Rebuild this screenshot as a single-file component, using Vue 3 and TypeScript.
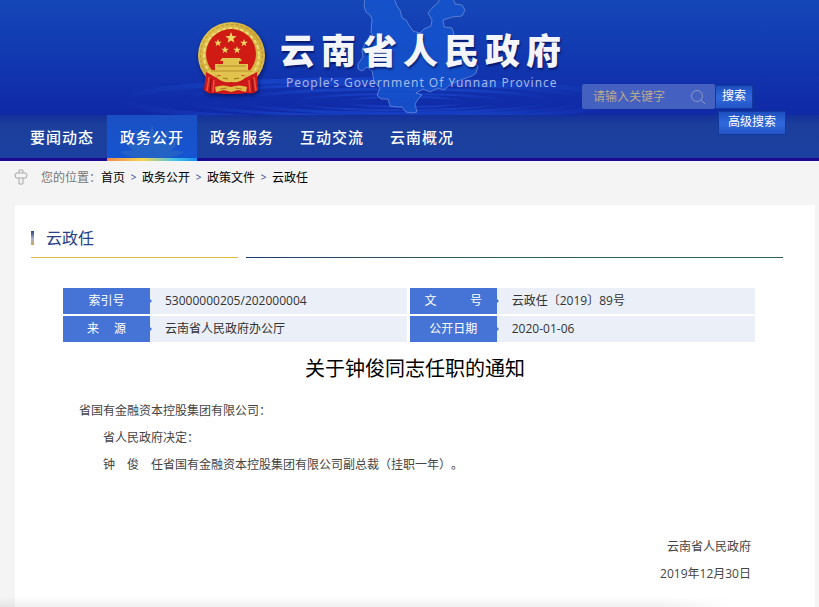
<script setup lang="ts">
import { ref } from 'vue'

interface InfoField {
  label: string
  value: string
}

const navItems: string[] = ['要闻动态', '政务公开', '政务服务', '互动交流', '云南概况']
const activeItem = ref('政务公开')
const keyword = ref('')

const crumbs: string[] = ['首页', '政务公开', '政策文件', '云政任']

const infoRows: InfoField[][] = [
  [
    { label: '索引号', value: '53000000205/202000004' },
    { label: '文\u3000\u3000\u00a0\u00a0\u00a0号', value: '云政任〔2019〕89号' },
  ],
  [
    { label: '来\u3000\u00a0源', value: '云南省人民政府办公厅' },
    { label: '公开日期', value: '2020-01-06' },
  ],
]

const starPoints = (cx: number, cy: number, r: number): string =>
  Array.from({ length: 10 }, (_, i) => {
    const radius = i % 2 === 0 ? r : r * 0.4
    const angle = (Math.PI / 5) * i - Math.PI / 2
    return `${(cx + radius * Math.cos(angle)).toFixed(2)},${(cy + radius * Math.sin(angle)).toFixed(2)}`
  }).join(' ')

const stars: string[] = [
  starPoints(34, 16, 6),
  starPoints(21, 21, 4),
  starPoints(47, 21, 4),
  starPoints(28, 28, 4),
  starPoints(40, 28, 4),
]
</script>

<template>
  <div class="page">
    <header class="banner">
      <svg class="backdrop" viewBox="0 0 819 115" preserveAspectRatio="xMinYMin slice" aria-hidden="true">
        <defs>
          <linearGradient id="wave" x1="0" x2="1" y1="0" y2="0">
            <stop offset="0" stop-color="#1c50da" stop-opacity="0" />
            <stop offset="0.25" stop-color="#1c50da" stop-opacity="0.5" />
            <stop offset="0.75" stop-color="#1c50da" stop-opacity="0.5" />
            <stop offset="1" stop-color="#1c50da" stop-opacity="0" />
          </linearGradient>
        </defs>
        <g fill="none" stroke="url(#wave)">
          <ellipse cx="370" cy="100" rx="245" ry="20" stroke-width="5" />
          <ellipse cx="385" cy="100" rx="200" ry="16" stroke-width="3" />
          <ellipse cx="395" cy="101" rx="155" ry="12" stroke-width="3" />
          <ellipse cx="400" cy="102" rx="105" ry="8" stroke-width="2" />
          <ellipse cx="405" cy="102" rx="60" ry="5" stroke-width="2" />
        </g>
        <path
          d="M365-2 364 6 366 12 370 15 372 19 371 32 373 36 366 42 362 50 363 57 358 64 358 69 362 71 367 67 372 71 374 81 380 88 377 95 381 99 388 99 390 106 397 107 402 107 406 112 412 113 417 112 415 104 419 98 422 95 416 93 423 89 430 92 438 88 444 90 451 84 458 81 463 79 472 76 476 73 478 66 472 60 464 56 461 49 450 44 449 38 454 34 452 28 444 27 443 20 452 17 462 16 465 10 462 5 455 4 453-2H440L438 3 433 7 428 13 432 20 431 26 424 29 420 33 413 31 409 25 406 20 402 18 400 10 397 6 394-2Z"
          fill="#1554cc"
          fill-opacity="0.85"
          stroke="#7593dc"
          stroke-opacity="0.7"
          stroke-linejoin="round"
        />
      </svg>

      <div class="brand">
        <svg class="emblem" viewBox="0 0 69 74" role="img" aria-label="国徽">
          <defs>
            <linearGradient id="gold" x1="0" x2="1" y1="0" y2="1">
              <stop offset="0" stop-color="#e6cd58" />
              <stop offset="0.5" stop-color="#cda93a" />
              <stop offset="1" stop-color="#e3c64e" />
            </linearGradient>
          </defs>
          <circle cx="34.5" cy="33.500" r="33.500" fill="url(#gold)" />
          <circle cx="34.5" cy="33.500" r="31" fill="none" stroke="#b8922e" stroke-width="1" stroke-dasharray="3 2" />
          <circle cx="34.5" cy="33.500" r="27.500" fill="none" stroke="#eedb76" stroke-width="2" stroke-dasharray="4 2" />
          <circle cx="34" cy="32" r="25" fill="#cf1b14" />
          <polygon v-for="(points, i) in stars" :key="i" :points="points" fill="#edd767" />
          <path d="M25 36H43L45 39H42V42H51V48H57Q56 51 54 53H14Q12 51 11 48H18V42H26V39H23Z" fill="#e2c24e" />
          <path d="M20 44H49M14 49H55" stroke="#b58b25" />
          <path d="M9 50Q13 52 20 56L48 56Q56 52 60 50L61 68Q56 73 50 71L42 72H26L18 71Q12 73 7 68Z" fill="#cd1919" />
          <path d="M12 55 10 69M17 58 16 70M57 55 59 69M52 58 53 70" stroke="#ee5440" stroke-width="1.5" />
          <path d="M14 57 13 70M55 57 56 70" stroke="#8d0b12" />
          <path d="M20 56Q24 51 30 53L34 51 38 53Q44 51 48 56 43 61 34 60 25 61 20 56Z" fill="#e1c34c" />
          <path d="M26 56 31 57M37 57 42 56" stroke="#9a741c" />
          <path d="M18 65Q26 62 34 65 42 62 50 65L49 70 41 68 34 70 27 68 19 70Z" fill="#dfbd46" />
          <path d="M23 67 30 66M38 66 45 67" stroke="#a87c20" />
        </svg>
        <div class="names">
          <h1>云南省人民政府</h1>
          <p>People’s Government Of Yunnan Province</p>
        </div>
      </div>

      <form class="search" @submit.prevent>
        <div class="search-row">
          <label class="search-box">
            <input v-model="keyword" type="text" placeholder="请输入关键字" aria-label="请输入关键字" />
            <svg viewBox="0 0 16 16" aria-hidden="true">
              <circle cx="7" cy="7" r="5.500" />
              <path d="M11 11 15 15" />
            </svg>
          </label>
          <button type="submit">搜索</button>
        </div>
        <button class="advanced" type="button">高级搜索</button>
      </form>
    </header>

    <nav class="main-nav">
      <a
        v-for="item in navItems"
        :key="item"
        href="#"
        :class="{ active: item === activeItem }"
        @click.prevent="activeItem = item"
      >
        <svg v-if="item === activeItem" class="plume" viewBox="0 0 90 42" aria-hidden="true">
          <g fill="#3f7fb4">
            <path d="M45 42Q38 26 45 8 52 26 45 42Z" />
            <path d="M45 42Q29 30 28 14 43 24 45 42Z" />
            <path d="M45 42Q61 30 62 14 47 24 45 42Z" />
            <path d="M45 42Q24 38 17 24 36 26 45 42Z" />
            <path d="M45 42Q66 38 73 24 54 26 45 42Z" />
            <path d="M45 42Q26 44 13 36 30 31 45 42Z" />
            <path d="M45 42Q64 44 77 36 60 31 45 42Z" />
          </g>
        </svg>
        <span>{{ item }}</span>
      </a>
    </nav>

    <div class="crumbs">
      <svg viewBox="0 0 14 16" aria-hidden="true">
        <path d="M5 4V1H9V4M2 4H12L13 6 12 9H2L1 6ZM5 9V15H9V9" />
      </svg>
      <span class="where">您的位置：</span>
      <template v-for="(crumb, i) in crumbs" :key="crumb">
        <span v-if="i > 0" class="sep">&gt;</span>
        <a href="#">{{ crumb }}</a>
      </template>
    </div>

    <main class="card">
      <h2 class="section">云政任</h2>
      <div class="rules"><i class="rule-gold"></i><i class="rule-green"></i></div>

      <table class="info">
        <tbody>
          <tr v-for="(row, r) in infoRows" :key="r">
            <template v-for="field in row" :key="field.label">
              <th scope="row">{{ field.label }}</th>
              <td>{{ field.value }}</td>
            </template>
          </tr>
        </tbody>
      </table>

      <article>
        <h3>关于钟俊同志任职的通知</h3>
        <p>省国有金融资本控股集团有限公司：</p>
        <p class="indent">省人民政府决定：</p>
        <p class="indent">钟　俊　任省国有金融资本控股集团有限公司副总裁（挂职一年）。</p>
        <div class="signature">
          <p>云南省人民政府</p>
          <p>2019年12月30日</p>
        </div>
      </article>
    </main>
  </div>
</template>

<style>
body {
  margin: 0;
}
</style>

<style scoped>
.page {
  position: relative;
  display: flex;
  flex-direction: column;
  min-height: 100vh;
  overflow: hidden;
  background: #f4f4f4;
  color: #444;
  font-family: "Open Sans", "Noto Sans CJK SC", sans-serif;
  font-size: 12px;
  text-spacing-trim: space-all;
}

.page::after {
  content: "";
  position: absolute;
  left: 0;
  right: 84px;
  bottom: 0;
  height: 10px;
  background: linear-gradient(rgba(0, 0, 0, 0), rgba(0, 0, 0, 0.06));
  mask-image: linear-gradient(90deg, #000 90%, transparent);
}

a {
  color: inherit;
  text-decoration: none;
}

h1,
h2,
h3,
p {
  margin: 0;
  font-weight: 400;
}

.banner {
  position: relative;
  z-index: 1;
  display: flex;
  align-items: flex-start;
  gap: 16px;
  box-sizing: border-box;
  height: 115px;
  padding-left: 197px;
  background: linear-gradient(#1547b8, #1138b0 50%, #1029a6);
}

.backdrop {
  position: absolute;
  inset: 0;
  width: 100%;
  height: 100%;
}

.brand {
  position: relative;
  display: flex;
  gap: 14px;
  flex: none;
  width: 369px;
  padding-top: 22px;
}

.emblem {
  flex: none;
  width: 69px;
  height: 74px;
  filter: drop-shadow(1px 2px 2px rgba(0, 0, 40, 0.5));
}

.names {
  padding-top: 8px;
  white-space: nowrap;
}

.names h1 {
  color: #f3f5fa;
  font-size: 35px;
  font-weight: 900;
  line-height: 42px;
  letter-spacing: 6px;
  text-shadow: 1px 2px 2px rgba(0, 0, 60, 0.6);
}

.names p {
  padding-left: 6px;
  color: #a5b8e8;
  font-family: "Noto Sans", sans-serif;
  font-size: 12px;
  line-height: 22px;
  letter-spacing: 1px;
}

.search {
  position: relative;
  display: flex;
  flex-direction: column;
  align-items: flex-start;
  gap: 2px;
  padding-top: 84px;
}

.search-row {
  display: flex;
  align-items: center;
}

.search-box {
  display: flex;
  align-items: center;
  box-sizing: border-box;
  width: 133px;
  height: 25px;
  padding: 0 9px 0 11px;
  border-radius: 2px;
  background: #4460c0;
}

.search-box input {
  flex: 1;
  min-width: 0;
  padding: 0;
  border: 0;
  outline: 0;
  background: transparent;
  color: #fff;
  font: inherit;
}

.search-box input::placeholder {
  color: #bba98e;
  opacity: 1;
}

.search-box svg {
  width: 16px;
  height: 16px;
  fill: none;
  stroke: #8a9cc4;
}

.search button {
  box-sizing: border-box;
  height: 24px;
  padding: 0 6px 1px;
  border: 1px solid #123a9c;
  background: linear-gradient(#1d4fbe, #3068dc 50%, #2356c6);
  color: #fff;
  font: inherit;
  line-height: 20px;
  white-space: nowrap;
}

.search .advanced {
  margin-left: 136px;
  padding: 0 9px 2px;
}

.main-nav {
  display: flex;
  height: 43px;
  padding-left: 17px;
  border-bottom: 3px solid #1b0a92;
  background: linear-gradient(#14309a, #1c3f9c 25%, #1b409f);
}

.main-nav a {
  position: relative;
  padding: 0 13px;
  color: #fff;
  font-size: 15px;
  font-weight: 500;
  line-height: 45px;
  letter-spacing: 1px;
}

.main-nav a:hover {
  background-color: #1850c4;
}

.main-nav .active {
  margin-bottom: -3px;
  background: linear-gradient(90deg, #f08a4c, #f5d54e 40%, #45c4ea 75%, #168cf0) bottom / 100% 3px no-repeat,
    linear-gradient(#1a50c4, #1555d2);
}

.main-nav span {
  position: relative;
}

.plume {
  position: absolute;
  left: 0;
  bottom: 3px;
  width: 90px;
  height: 42px;
  opacity: 0.35;
}

.crumbs {
  display: flex;
  align-items: center;
  height: 32px;
  padding: 0 14px 12px;
  color: #000;
}

.crumbs svg {
  width: 14px;
  height: 16px;
  margin-right: 13px;
  fill: none;
  stroke: #aaa;
  stroke-width: 1;
}

.crumbs .where {
  color: #777;
}

.crumbs .sep {
  width: 17px;
  color: #2d3f95;
  font-size: 10px;
  text-align: center;
}

.card {
  flex: 1;
  margin: 0 4px 0 15px;
  padding: 21px 0 20px;
  background: #fff;
}

.section {
  display: flex;
  align-items: center;
  gap: 12px;
  margin-left: 16px;
  color: #27408b;
  font-size: 16px;
  line-height: 24px;
}

.section::before {
  content: "";
  width: 3px;
  height: 14px;
  background: linear-gradient(#27408b, #a9b0cc 55%, #c9a94f);
}

.rules {
  display: flex;
  gap: 8px;
  margin: 7px 32px 0 16px;
}

.rule-gold {
  flex: 207;
  height: 1px;
  background: #e0b840;
}

.rule-green {
  flex: 537;
  height: 1px;
  background: linear-gradient(90deg, #1f3a75, #2f5d55 40%, #2f6148);
}

.info {
  width: calc(100% - 108px);
  margin: 30px 60px 0 48px;
  border-collapse: collapse;
  table-layout: fixed;
}

.info th,
.info td {
  height: 26px;
  padding: 0;
  border-bottom: 2px solid #fff;
  line-height: 26px;
}

.info th {
  position: relative;
  width: 87px;
  background: #4674d6;
  color: #fff;
  font-weight: 400;
  white-space: pre;
}

.info th::after {
  content: "";
  position: absolute;
  top: 11px;
  left: 100%;
  border: 2px solid transparent;
  border-left-color: #4674d6;
}

.info td {
  padding-left: 15px;
  background: #eaeff8;
  color: #333;
}

.info td:nth-child(2) {
  border-right: 3px solid #fff;
}

article {
  padding: 9px 64px 0;
  line-height: 27px;
}

article h3 {
  margin-bottom: 12px;
  color: #000;
  font-size: 20px;
  line-height: 32px;
  text-align: center;
}

.indent {
  text-indent: 24px;
}

.signature {
  margin-top: 55px;
  text-align: right;
}
</style>
